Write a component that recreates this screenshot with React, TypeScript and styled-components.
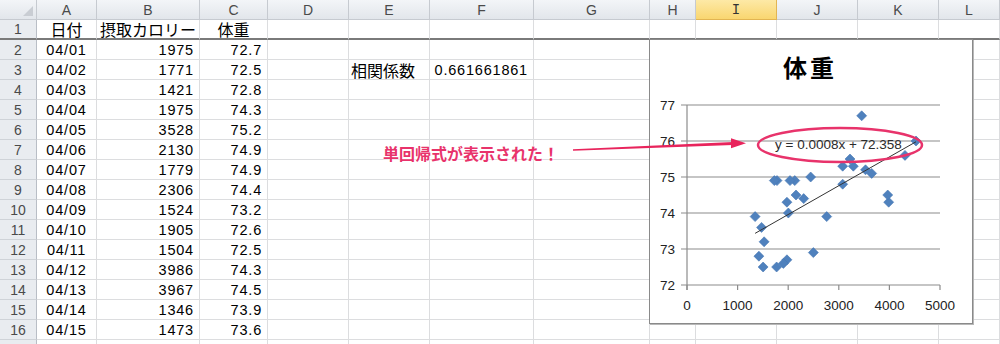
import React from "react"
import styled, { createGlobalStyle } from "styled-components"

const COLS = ["A", "B", "C", "D", "E", "F", "G", "H", "I", "J", "K", "L"]
const WIDTHS = [60, 103, 68, 81, 81, 104, 116, 46, 81, 81, 81, 61]
const SELECTED_COL = "I"
const ROW_COUNT = 17
const LAST_VISIBLE_ROW = 16

type Align = "left" | "center" | "right"
interface CellData {
	text: string
	align: Align
}

const records: [string, number, number][] = [
	["04/01", 1975, 72.7],
	["04/02", 1771, 72.5],
	["04/03", 1421, 72.8],
	["04/04", 1975, 74.3],
	["04/05", 3528, 75.2],
	["04/06", 2130, 74.9],
	["04/07", 1779, 74.9],
	["04/08", 2306, 74.4],
	["04/09", 1524, 73.2],
	["04/10", 1905, 72.6],
	["04/11", 1504, 72.5],
	["04/12", 3986, 74.3],
	["04/13", 3967, 74.5],
	["04/14", 1346, 73.9],
	["04/15", 1473, 73.6]
]

// points further down the sheet (rows not visible)
const hiddenPoints: [number, number][] = [
	[3452, 76.7],
	[4526, 76.0],
	[4308, 75.6],
	[3221, 75.5],
	[3077, 75.3],
	[3287, 75.3],
	[3650, 75.1],
	[3077, 74.8],
	[1726, 74.9],
	[2036, 74.9],
	[2444, 75.0],
	[2154, 74.5],
	[2003, 74.0],
	[2761, 73.9],
	[2497, 72.9]
]

const cells: Record<string, CellData> = {
	A1: { text: "日付", align: "center" },
	B1: { text: "摂取カロリー", align: "center" },
	C1: { text: "体重", align: "center" },
	E3: { text: "相関係数", align: "left" },
	F3: { text: "0.661661861", align: "right" }
}
records.forEach(([date, kcal, weight], i) => {
	const row = i + 2
	cells["A" + row] = { text: date, align: "center" }
	cells["B" + row] = { text: String(kcal), align: "right" }
	cells["C" + row] = { text: weight.toFixed(1), align: "right" }
})

const isJapanese = (s: string) => /[\u3000-\u9fff\uff00-\uffef]/.test(s)

const px = (x: number) => 687 + x * 0.0506
const py = (y: number) => 285 - (y - 72) * 36

const points: [number, number][] = [...records.map(r => [r[1], r[2]] as [number, number]), ...hiddenPoints]

const Chart = () => {
	const x0 = 1346
	const x1 = 4526
	const trend = (x: number) => 0.0008 * x + 72.358
	const m = 5
	return (
		<ChartSvg width={322} height={283} viewBox="650 40 322 283">
			<ChartTitle x={810} y={77} textAnchor="middle">
				体重
			</ChartTitle>
			{[72, 73, 74, 75, 76, 77].map(v => (
				<g key={v}>
					<line x1={681} x2={940} y1={py(v)} y2={py(v)} stroke="#8c8c8c" strokeWidth={1.2} />
					<AxisLabel x={675} y={py(v) + 5} textAnchor="end">
						{v}
					</AxisLabel>
				</g>
			))}
			<line x1={687} x2={687} y1={py(77)} y2={290} stroke="#8c8c8c" strokeWidth={1.2} />
			{[0, 1000, 2000, 3000, 4000, 5000].map(v => (
				<g key={v}>
					<line x1={px(v)} x2={px(v)} y1={285} y2={290} stroke="#8c8c8c" strokeWidth={1.2} />
					<AxisLabel x={px(v)} y={310} textAnchor="middle">
						{v}
					</AxisLabel>
				</g>
			))}
			{points.map(([x, y], i) => {
				const cx = px(x)
				const cy = py(y)
				return (
					<polygon
						key={i}
						points={`${cx},${cy - m} ${cx + m},${cy} ${cx},${cy + m} ${cx - m},${cy}`}
						fill="#4f81bd"
						stroke="#4677b4"
						strokeWidth={0.6}
					/>
				)
			})}
			<line x1={px(x0)} y1={py(trend(x0))} x2={px(x1)} y2={py(trend(x1))} stroke="#333" strokeWidth={1} />
			<Equation x={775} y={149}>
				y = 0.0008x + 72.358
			</Equation>
			<ellipse cx={840} cy={145} rx={82} ry={17} fill="none" stroke="#e8336b" strokeWidth={2.5} />
		</ChartSvg>
	)
}

export default function App() {
	const rows = Array.from({ length: ROW_COUNT }, (_, i) => i + 1)
	return (
		<>
			<GlobalStyle />
			<Sheet>
				<Grid>
					<Corner />
					{COLS.map(c => (
						<ColHeader key={c} $selected={c === SELECTED_COL}>
							{c}
						</ColHeader>
					))}
					{rows.map(r => (
						<React.Fragment key={r}>
							<RowHeader $frozen={r === 1}>{r <= LAST_VISIBLE_ROW ? r : ""}</RowHeader>
							{COLS.map(c => {
								const cell = cells[c + r]
								const jp = cell ? isJapanese(cell.text) : false
								return (
									<Cell key={c} $align={cell?.align ?? "left"} $frozen={r === 1} $jp={jp}>
										{cell?.text}
									</Cell>
								)
							})}
						</React.Fragment>
					))}
				</Grid>
				<ChartFrame>
					<Chart />
				</ChartFrame>
				<Callout>単回帰式が表示された！</Callout>
				<ArrowSvg width={180} height={20} viewBox="570 134 180 20">
					<polygon points="573,149.3 733,141.9 733,145.1 573,150.7" fill="#e8245c" />
					<polygon points="731,138.3 746,143.2 731,148.3" fill="#e8245c" />
				</ArrowSvg>
			</Sheet>
		</>
	)
}

const GlobalStyle = createGlobalStyle`
	body {
		margin: 0;
		background: #fff;
		overflow: hidden;
	}
`

const Sheet = styled.div`
	position: relative;
	width: 1000px;
	height: 344px;
	overflow: hidden;
	font-family: "Liberation Sans", "Noto Sans CJK JP", sans-serif;
	color: #000;
`

const Grid = styled.div`
	display: grid;
	grid-template-columns: 37px ${WIDTHS.map(w => w + "px").join(" ")};
	grid-auto-rows: 20px;
`

const HeaderBase = styled.div`
	box-sizing: border-box;
	display: flex;
	align-items: center;
	justify-content: center;
	background: linear-gradient(#f3f5f8, #e2e6eb);
	border-right: 1px solid #c6cad0;
	border-bottom: 1px solid #c6cad0;
	color: #4a4a4a;
	font-size: 14px;
`

const Corner = styled(HeaderBase)`
	position: relative;
	&::after {
		content: "";
		position: absolute;
		right: 3px;
		bottom: 3px;
		border-style: solid;
		border-width: 0 0 10px 10px;
		border-color: transparent transparent #c9cdd3 transparent;
	}
`

const ColHeader = styled(HeaderBase)<{ $selected: boolean }>`
	${p =>
		p.$selected &&
		`
		background: linear-gradient(#fde9a6, #f9d670);
		border-right: 1px solid #e2b552;
		border-bottom: 1px solid #e2b552;
		font-family: "Liberation Mono", monospace;
		color: #333;
	`}
`

const RowHeader = styled(HeaderBase)<{ $frozen: boolean }>`
	background: #e9ecf0;
	border-right: 1px solid #b9bec6;
	border-bottom: ${p => (p.$frozen ? "2px solid #7a7a7a" : "1px solid #cfd3d8")};
`

const Cell = styled.div<{ $align: Align; $frozen: boolean; $jp: boolean }>`
	box-sizing: border-box;
	display: flex;
	align-items: center;
	justify-content: ${p => (p.$align === "left" ? "flex-start" : p.$align === "right" ? "flex-end" : "center")};
	padding: 0 ${p => (p.$align === "left" ? "2px" : "5px")};
	border-right: 1px solid #dcdddf;
	border-bottom: ${p => (p.$frozen ? "2px solid #7a7a7a" : "1px solid #dcdddf")};
	font-size: ${p => (p.$jp ? "16px" : "14.5px")};
	letter-spacing: ${p => (p.$jp ? "0" : "0.8px")};
	white-space: nowrap;
	overflow: hidden;
`

const ChartFrame = styled.div`
	position: absolute;
	left: 649px;
	top: 39px;
	width: 324px;
	height: 285px;
	box-sizing: border-box;
	border: 1px solid #8a8a8a;
	box-shadow: 1px 1px 0 #b8b8b8;
	background: #fff;
`

const ChartSvg = styled.svg`
	display: block;
	font-family: "Liberation Sans", "Noto Sans CJK JP", sans-serif;
`

const ChartTitle = styled.text`
	font-family: "Noto Sans CJK JP", sans-serif;
	font-size: 24px;
	font-weight: bold;
	letter-spacing: 3px;
	fill: #000;
`

const AxisLabel = styled.text`
	font-size: 13.5px;
	fill: #222;
`

const Equation = styled.text`
	font-size: 13.5px;
	fill: #2b2b2b;
`

const Callout = styled.div`
	position: absolute;
	left: 383px;
	top: 143px;
	font-family: "Noto Sans CJK JP", sans-serif;
	font-size: 16px;
	line-height: 20px;
	font-weight: bold;
	color: #e8336b;
	white-space: nowrap;
	text-shadow: 0 0 2px #fff, 0 0 3px #fff;
`

const ArrowSvg = styled.svg`
	position: absolute;
	left: 570px;
	top: 134px;
`
